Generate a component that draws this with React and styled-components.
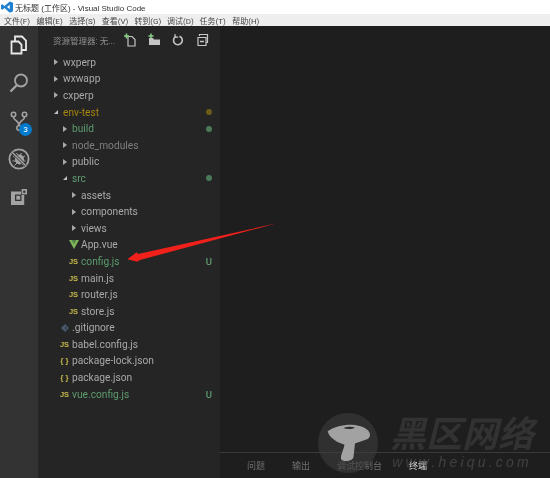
import React from 'react';
import styled, { createGlobalStyle } from 'styled-components';

const rows = [
  { name: 'wxperp', depth: 0, arrow: 'right' },
  { name: 'wxwapp', depth: 0, arrow: 'right' },
  { name: 'cxperp', depth: 0, arrow: 'right' },
  { name: 'env-test', depth: 0, arrow: 'down', color: '#a6860f', dot: '#6d5c17' },
  { name: 'build', depth: 1, arrow: 'right', color: '#5d9c6e', dot: '#4b7a58' },
  { name: 'node_modules', depth: 1, arrow: 'right', color: '#7f7f7f' },
  { name: 'public', depth: 1, arrow: 'right' },
  { name: 'src', depth: 1, arrow: 'down', color: '#5d9c6e', dot: '#4b7a58' },
  { name: 'assets', depth: 2, arrow: 'right' },
  { name: 'components', depth: 2, arrow: 'right' },
  { name: 'views', depth: 2, arrow: 'right' },
  { name: 'App.vue', depth: 2, icon: 'vue' },
  { name: 'config.js', depth: 2, icon: 'js', color: '#5d9c6e', mark: 'U' },
  { name: 'main.js', depth: 2, icon: 'js' },
  { name: 'router.js', depth: 2, icon: 'js' },
  { name: 'store.js', depth: 2, icon: 'js' },
  { name: '.gitignore', depth: 1, icon: 'git' },
  { name: 'babel.config.js', depth: 1, icon: 'js' },
  { name: 'package-lock.json', depth: 1, icon: 'json' },
  { name: 'package.json', depth: 1, icon: 'json' },
  { name: 'vue.config.js', depth: 1, icon: 'js', color: '#5d9c6e', mark: 'U' },
];

const menus = ['文件(F)', '编辑(E)', '选择(S)', '查看(V)', '转到(G)', '调试(D)', '任务(T)', '帮助(H)'];
const tabs = [
  { label: '问题', w: 45 },
  { label: '输出', w: 45 },
  { label: '调试控制台', w: 72 },
  { label: '终端', w: 30, active: true },
];

function FileIcon({ type }) {
  if (type === 'js') return <JsIcon>JS</JsIcon>;
  if (type === 'json') return <JsonIcon>{'{ }'}</JsonIcon>;
  if (type === 'vue') {
    return (
      <svg width="10" height="9" viewBox="0 0 10 9">
        <path d="M0 0h10L5 9z" fill="#7fb35a" />
        <path d="M2.8 0h4.4L5 4z" fill="#4f7a4a" />
      </svg>
    );
  }
  return (
    <svg width="10" height="10" viewBox="0 0 10 10">
      <path d="M5 1l4 4-4 4-4-4z" fill="#46586a" />
      <path d="M5 3.5L6.5 5 5 6.5z" fill="#252526" />
    </svg>
  );
}

function App() {
  return (
    <Page>
      <GlobalStyle />
      <TitleBar>
        <svg width="12" height="12" viewBox="0 0 13 13">
          <path d="M9.5 0.5L13 2v9l-3.5 1.6L3.8 7.6 1.4 9.4 0 8.6V4.4l1.4-.8 2.4 1.8zM9.5 4L6.5 6.5l3 2.5z" fill="#1f7fd0" />
        </svg>
        <TitleText>无标题 (工作区) - Visual Studio Code</TitleText>
      </TitleBar>
      <MenuBar>
        {menus.map((m) => (
          <MenuItem key={m}>{m}</MenuItem>
        ))}
      </MenuBar>
      <Main>
        <ActivityBar>
          <ActivityItem>
            <svg width="18" height="20" viewBox="0 0 18 20" fill="none" stroke="#e8e8e8" strokeWidth="1.8">
              <path d="M1.5 6.5h7l3 3v9h-10z" fill="#333" />
              <path d="M5 6V1.5h7l4 4V15h-4.5" />
            </svg>
          </ActivityItem>
          <ActivityItem>
            <svg width="20" height="20" viewBox="0 0 20 20" fill="none" stroke="#a3a3a3" strokeWidth="1.8">
              <circle cx="12" cy="7.5" r="6" />
              <path d="M8 12L1.5 18.5" strokeWidth="2.4" />
            </svg>
          </ActivityItem>
          <ActivityItem>
            <svg width="18" height="20" viewBox="0 0 18 20" fill="none" stroke="#a3a3a3" strokeWidth="1.6">
              <circle cx="3.5" cy="3.5" r="2.2" />
              <circle cx="14.5" cy="3.5" r="2.2" />
              <circle cx="9" cy="17" r="2.2" />
              <path d="M3.5 6c0 4 5.5 3 5.5 8.8M14.5 6c0 4-5.5 3-5.5 8.8" />
            </svg>
            <Badge>3</Badge>
          </ActivityItem>
          <ActivityItem>
            <svg width="22" height="22" viewBox="0 0 22 22" fill="none" stroke="#a3a3a3" strokeWidth="1.8">
              <circle cx="11" cy="11" r="9.6" />
              <ellipse cx="11.5" cy="11.5" rx="4.6" ry="5" fill="#a3a3a3" stroke="none" />
              <path d="M5 8l3 1.5M17 8l-3 1.5M4.5 13h3M17.5 13h-3M6.5 17.5l2.5-2.5M15.5 17.5L13 15M8.5 5l1.5 2.5M13.5 5L12 7.5" strokeWidth="1" />
              <path d="M4.2 4.2l13.6 13.6" stroke="#333" strokeWidth="2.8" />
              <path d="M4.2 4.2l13.6 13.6" strokeWidth="1.4" />
            </svg>
          </ActivityItem>
          <ActivityItem>
            <svg width="16" height="16" viewBox="0 0 16 16">
              <path d="M0 2.5h10V6h3.2v10H0z" fill="#a3a3a3" />
              <path d="M10.6 0H16v5.4h-5.4z" fill="#a3a3a3" />
              <path d="M4 5.5h6.5V12H4z" fill="#333" />
              <path d="M5.3 6.8h3.9v3.9H5.3z" fill="#a3a3a3" />
              <path d="M12.2 1.6h2.2v2.2h-2.2z" fill="#333" />
            </svg>
          </ActivityItem>
        </ActivityBar>
        <Sidebar>
          <SidebarHead>
            <HeadTitle>资源管理器: 无...</HeadTitle>
            <HeadIcons>
              <svg width="14" height="14" viewBox="0 0 14 14" fill="none" stroke="#c5c5c5" strokeWidth="1.2">
                <path d="M5 3.5h4l3 3v6.5H5z" />
                <path d="M3.5 0.5v5M1 3h5" stroke="#89d185" strokeWidth="1.5" />
              </svg>
              <svg width="14" height="14" viewBox="0 0 14 14">
                <path d="M2 5h4l1 1.5h6V12H2z" fill="#c5c5c5" />
                <path d="M4 0.5v5M1.5 3h5" stroke="#89d185" strokeWidth="1.5" />
              </svg>
              <svg width="14" height="14" viewBox="0 0 14 14" fill="none" stroke="#c5c5c5" strokeWidth="1.6">
                <path d="M8.5 3.2a4.4 4.4 0 1 1-3.6.2" />
                <path d="M4 1v3.2h3.2" strokeWidth="1.2" />
              </svg>
              <svg width="14" height="14" viewBox="0 0 14 14" fill="none" stroke="#c5c5c5" strokeWidth="1.2">
                <path d="M4.5 3V1.5h8v8H11" />
                <path d="M3 4.5h8v8H3z" />
                <path d="M5 8.5h4" strokeWidth="1.5" />
              </svg>
            </HeadIcons>
          </SidebarHead>
          <Tree>
            {rows.map((r) => (
              <Row key={r.name} $depth={r.depth}>
                <Lead>
                  {r.arrow ? <Arrow $dir={r.arrow} /> : <FileIcon type={r.icon} />}
                </Lead>
                <RowName $color={r.color}>{r.name}</RowName>
                {r.dot && <Dot $color={r.dot} />}
                {r.mark && <Mark>{r.mark}</Mark>}
              </Row>
            ))}
          </Tree>
        </Sidebar>
        <Editor>
          <Panel>
            {tabs.map((t) => (
              <Tab key={t.label} $w={t.w} $active={t.active}>
                {t.label}
              </Tab>
            ))}
          </Panel>
        </Editor>
      </Main>
      <Pointer width="155" height="45" viewBox="0 0 155 45">
        <path d="M2.3 39.3L11.7 32.3 13 34 151.7 3.3 15 40 12.3 41.7z" fill="#f0201a" />
      </Pointer>
      <Watermark>
        <Stamp>
          <svg width="60" height="60" viewBox="0 0 60 60">
            <path d="M9.7 18.3C15 14 25 11.5 33.7 11.7 43 12 52 16 52 21.7 52 24.5 50 26.2 47 27 43 28.5 39 29.5 37 30.5L35.5 44C35 48.5 24.5 49.5 23 46 22.5 42 25.5 37 26.5 31.7 20 30 11 25 9.7 18.3z" fill="#a2a2a2" />
            <path d="M25.3 15c4-1.6 8-1.6 11.7-.6-3 2-8 2-11.7.6z" fill="#2b2b2b" />
          </svg>
        </Stamp>
        <MarkText>
          <MarkTitle>黑区网络</MarkTitle>
          <MarkUrl>www.heiqu.com</MarkUrl>
        </MarkText>
      </Watermark>
    </Page>
  );
}

const GlobalStyle = createGlobalStyle`
  html, body {
    margin: 0;
    padding: 0;
    background: #1e1e1e;
  }
`;
const Page = styled.div`
  position: relative;
  width: 550px;
  height: 478px;
  overflow: hidden;
  display: flex;
  flex-direction: column;
  font-family: Roboto, "Noto Sans CJK SC", sans-serif;
  filter: blur(0.4px);
`;
const TitleBar = styled.div`
  height: 14px;
  background: #fff;
  display: flex;
  align-items: center;
  gap: 2px;
  padding-left: 1px;
`;
const TitleText = styled.div`
  font-family: "Liberation Sans", "Noto Sans CJK SC", sans-serif;
  font-size: 8px;
  color: #333;
  white-space: nowrap;
`;
const MenuBar = styled.div`
  height: 12px;
  background: #eeeeee;
  display: flex;
  align-items: center;
  gap: 5px;
  padding-left: 4px;
`;
const MenuItem = styled.div`
  font-size: 8px;
  color: #444;
  width: 27.6px;
  white-space: nowrap;
`;
const Main = styled.div`
  flex: 1;
  display: flex;
  min-height: 0;
`;
const ActivityBar = styled.div`
  width: 38px;
  background: #333333;
  display: flex;
  flex-direction: column;
  align-items: center;
  padding-top: 5px;
  gap: 10px;
`;
const ActivityItem = styled.div`
  position: relative;
  width: 38px;
  height: 28px;
  display: flex;
  align-items: center;
  justify-content: center;
`;
const Badge = styled.div`
  position: absolute;
  right: 6px;
  bottom: -1px;
  width: 13px;
  height: 13px;
  border-radius: 50%;
  background: #007acc;
  color: #fff;
  font-size: 8px;
  line-height: 13px;
  text-align: center;
`;
const Sidebar = styled.div`
  width: 182px;
  background: #252526;
  display: flex;
  flex-direction: column;
`;
const SidebarHead = styled.div`
  height: 28px;
  display: flex;
  align-items: center;
  padding-left: 15px;
`;
const HeadTitle = styled.div`
  font-size: 8.5px;
  color: #8f8f8f;
  width: 70px;
  white-space: nowrap;
`;
const HeadIcons = styled.div`
  display: flex;
  gap: 10px;
`;
const Tree = styled.div`
  display: flex;
  flex-direction: column;
`;
const Row = styled.div`
  height: 16.6px;
  display: flex;
  align-items: center;
  padding-left: ${(p) => 10 + p.$depth * 9}px;
  padding-right: 8px;
`;
const Lead = styled.div`
  width: 15px;
  display: flex;
  align-items: center;
  justify-content: center;
`;
const Arrow = styled.div`
  width: 0;
  height: 0;
  ${(p) =>
    p.$dir === 'right'
      ? `border-left: 4px solid #a8a8a8;
         border-top: 3px solid transparent;
         border-bottom: 3px solid transparent;`
      : `border-right: 4.5px solid #c0c0c0;
         border-top: 4.5px solid transparent;`}
`;
const JsIcon = styled.div`
  font-size: 7.5px;
  font-weight: 700;
  color: #c5b94a;
  font-family: "Liberation Sans", sans-serif;
`;
const JsonIcon = styled.div`
  font-size: 8px;
  font-weight: 700;
  color: #c5b94a;
  white-space: nowrap;
  font-family: "Liberation Sans", sans-serif;
`;
const RowName = styled.div`
  flex: 1;
  font-size: 10.2px;
  color: ${(p) => p.$color || '#a9a9a9'};
  white-space: nowrap;
`;
const Dot = styled.div`
  width: 6px;
  height: 6px;
  border-radius: 50%;
  background: ${(p) => p.$color};
`;
const Mark = styled.div`
  font-size: 9.5px;
  font-weight: 500;
  color: #5d9c6e;
`;
const Editor = styled.div`
  flex: 1;
  background: #1e1e1e;
  display: flex;
  flex-direction: column;
  justify-content: flex-end;
`;
const Panel = styled.div`
  height: 25px;
  border-top: 1px solid #3a3a3a;
  display: flex;
  align-items: center;
  padding-left: 27px;
`;
const Tab = styled.div`
  width: ${(p) => p.$w}px;
  font-size: 9px;
  white-space: nowrap;
  color: ${(p) => (p.$active ? '#e0e0e0' : '#6f6f6f')};
`;
const Pointer = styled.svg`
  position: absolute;
  left: 125px;
  top: 220px;
`;
const Watermark = styled.div`
  position: absolute;
  left: 318px;
  top: 413px;
  display: flex;
  gap: 12px;
`;
const Stamp = styled.div`
  width: 60px;
  height: 60px;
  border-radius: 50%;
  background: rgba(64, 64, 64, 0.55);
`;
const MarkText = styled.div`
  display: flex;
  flex-direction: column;
  align-items: center;
  margin-top: 3px;
`;
const MarkTitle = styled.div`
  font-size: 36px;
  line-height: 38px;
  font-style: italic;
  font-weight: 700;
  color: rgba(70, 70, 70, 0.5);
  white-space: nowrap;
`;
const MarkUrl = styled.div`
  font-family: "Liberation Sans", sans-serif;
  font-size: 14px;
  line-height: 16px;
  font-style: italic;
  letter-spacing: 3.2px;
  color: rgba(80, 80, 80, 0.7);
  white-space: nowrap;
`;

export default App;
